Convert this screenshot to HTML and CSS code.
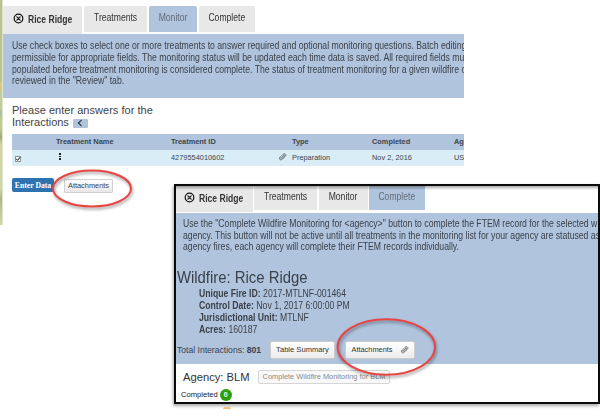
FILE: index.html
```
<!DOCTYPE html>
<html lang="en">
<head>
<meta charset="utf-8">
<title>Treatment monitoring</title>
<link rel="stylesheet" href="styles.css">
</head>
<body>
<div class="map-strip"></div>
<main class="monitor">
  <nav class="tabs">
    <div class="tab fire"><svg class="close" viewBox="0 0 12 12"><circle cx="6" cy="6" r="4.7"/><path d="M4.2 4.2l3.6 3.6M7.8 4.2l-3.6 3.6"/></svg><span class="t-fire">Rice Ridge</span></div>
    <div class="tab treatments"><span>Treatments</span></div>
    <div class="tab mon active"><span>Monitor</span></div>
    <div class="tab complete"><span>Complete</span></div>
  </nav>
  <section class="notice">
    <p>Use check boxes to select one or more treatments to answer required and optional monitoring questions. Batch editing</p>
    <p>permissible for appropriate fields. The monitoring status will be updated each time data is saved. All required fields must</p>
    <p>populated before treatment monitoring is considered complete. The status of treatment monitoring for a given wildfire c</p>
    <p>reviewed in the "Review" tab.</p>
  </section>
  <h1><span class="h-a">Please enter answers for the</span><span class="h-b">Interactions<button class="back"><svg viewBox="0 0 8 8"><path d="M5.2 1.4L2.4 4l2.8 2.6"/></svg></button></span></h1>
  <div class="table">
    <div class="row head"><span></span><span>Treatment Name</span><span>Treatment ID</span><span></span><span>Type</span><span>Completed</span><span>Agency</span></div>
    <div class="row"><span class="check"><svg viewBox="0 0 6 6"><path d="M1.4 3l1.2 1.4L4.8 1.5"/></svg></span><span class="dots"><i></i><i></i><i></i></span><span>4279554010602</span><svg class="clip" viewBox="0 0 10 10"><path d="M3 7.2L6.7 3.5M2 6.2L5.6 2.5C7.5.7 9.9 2.9 8.2 4.7L4.7 8.1C2.9 9.7.5 8 2 6.2M4 7.7L7.4 4.3C8 3.5 7.2 2.8 6.5 3.5"/></svg><span>Preparation</span><span>Nov 2, 2016</span><span>USFS</span></div>
  </div>
  <div class="actions"><button class="enter">Enter Data</button><button class="attach-sm">Attachments</button></div>
</main>

<section class="window">
  <nav class="tabs">
    <div class="tab fire"><svg class="close" viewBox="0 0 12 12"><circle cx="6" cy="6" r="4.7"/><path d="M4.2 4.2l3.6 3.6M7.8 4.2l-3.6 3.6"/></svg><span class="t-fire">Rice Ridge</span></div>
    <div class="tab treatments"><span>Treatments</span></div>
    <div class="tab mon"><span>Monitor</span></div>
    <div class="tab complete active"><span>Complete</span></div>
  </nav>
  <section class="details">
    <div class="intro">
      <p>Use the "Complete Wildfire Monitoring for &lt;agency&gt;" button to complete the FTEM record for the selected w</p>
      <p>agency. This button will not be active until all treatments in the monitoring list for your agency are statused as</p>
      <p>agency fires, each agency will complete their FTEM records individually.</p>
    </div>
    <h2>Wildfire: Rice Ridge</h2>
    <div class="facts">
      <p><b>Unique Fire ID:</b> 2017-MTLNF-001464</p>
      <p><b>Control Date:</b> Nov 1, 2017 6:00:00 PM</p>
      <p><b>Jurisdictional Unit:</b> MTLNF</p>
      <p><b>Acres:</b> 160187</p>
    </div>
    <div class="totals"><span class="total">Total Interactions: <b>801</b></span><button class="summary">Table Summary</button><button class="attach">Attachments<svg class="clip" viewBox="0 0 10 10"><path d="M3 7.2L6.7 3.5M2 6.2L5.6 2.5C7.5.7 9.9 2.9 8.2 4.7L4.7 8.1C2.9 9.7.5 8 2 6.2M4 7.7L7.4 4.3C8 3.5 7.2 2.8 6.5 3.5"/></svg></button></div>
  </section>
  <div class="agency"><span class="agency-name">Agency: BLM</span><button class="finish">Complete Wildfire Monitoring for BLM</button></div>
  <div class="status"><span>Completed</span><b>0</b></div>
</section>
<div class="peek"></div>
<svg class="marks" viewBox="0 0 600 416"><ellipse cx="92" cy="188.5" rx="39" ry="18"/><ellipse cx="386.3" cy="347" rx="48.7" ry="27.7"/></svg>
</body>
</html>
```
FILE: styles.css
```
* { box-sizing: border-box; }
body { margin: 0; width: 600px; height: 416px; overflow: hidden; position: relative; display: flex; align-items: flex-start; background: #fff; color: #3b424b; font: 10.2px/12px "Liberation Sans", sans-serif; }
p, h1, h2 { margin: 0; font-weight: 400; white-space: nowrap; }
p { transform: scaleX(.851); transform-origin: 0 0; }
button { font: inherit; color: inherit; margin: 0; padding: 0; border: 0; white-space: nowrap; flex: none; }
svg { fill: none; stroke: #333; stroke-linecap: round; }
.map-strip { width: 3px; height: 225px; flex: none; border-right: 1px solid #dfe3ce; background: linear-gradient(#b9c68b 0 36%, #d9c982 37% 39%, #c1cd9b 41% 48%, #a6bda8 50%, #c3cb94 53% 57%, #9fae77 61%, #ced7a1 64% 84%, #aeb982 88%, #d3d8a9); }
.monitor { width: 461px; height: 225px; padding-top: 6px; overflow: hidden; flex: none; }
.tabs { display: flex; height: 28px; gap: 2px; }
.tab { height: 26px; background: #e8e8e8; color: #333; border-radius: 2px 2px 0 0; flex: none; display: flex; justify-content: center; padding-top: 6px; white-space: nowrap; }
.tab span { transform: scaleX(.845); }
.tab.fire { width: 79px; height: 28px; padding: 8px 0 0 10px; justify-content: flex-start; gap: 4px; font-weight: 700; }
.tab .t-fire { transform: scaleX(.84); transform-origin: 0 0; }
.tab.treatments { width: 63px; }
.tab.mon { width: 48px; }
.tab.complete { width: 56px; }
.tab.active { background: #b0c4de; color: #626c79; }
.close { width: 11px; height: 11px; stroke: #111; stroke-width: 1.3; margin-top: -1px; flex: none; }
.notice { background: #b0c4de; height: 64px; padding: 6px 9px; line-height: 11.8px; }
h1 { display: flex; flex-direction: column; padding: 6px 0 0 9px; font-size: 11px; line-height: 12.3px; height: 36px; color: #444; }
.h-a { letter-spacing: .03px; }
.back { width: 15px; height: 9px; margin-left: 4px; background: #b0c4de; vertical-align: -1px; border-radius: 1px; line-height: 0; }
.back svg { width: 8px; height: 8px; stroke-width: 1.2; }
.table { margin-left: 9px; font-size: 7.4px; }
.row { display: grid; grid-template-columns: 44px 115px 107px 14px 80px 82px 40px; height: 16px; line-height: 16px; background: #d9edf7; color: #3d454b; }
.row.head { background: #b0c4de; font-weight: 700; }
.check { width: 6px; height: 6px; margin: 6px 0 0 3px; border: 1px solid #899; background: #fff; line-height: 0; display: block; }
.check svg { width: 6px; height: 6px; margin: -1px; stroke: #111; }
.dots { display: flex; flex-direction: column; gap: 1px; padding: 3px 0 0 3px; }
.dots i { width: 1.6px; height: 1.6px; background: #222; }
.clip { width: 9px; height: 9px; stroke: #4a4a4a; stroke-width: .75; }
.row .clip { margin-top: 2px; }
.actions { display: flex; gap: 10px; padding: 12px 0 0 9px; height: 30px; align-items: flex-start; }
.enter { width: 42px; height: 14px; background: #2f72b0; color: #fff; font: 700 7.7px/13px "Liberation Serif", serif; border-radius: 2px; }
.attach-sm { width: 49px; height: 14px; margin-top: 1px; font-size: 7.4px; line-height: 12px; background: linear-gradient(#fff, #e8e8e8); border: 1px solid #d0d0d0; border-radius: 1px; }
.window { position: absolute; left: 174px; top: 184px; width: 426px; height: 220px; border: 2px solid #0b0b0b; background: #fff; overflow: hidden; box-shadow: -1px 2px 3px #aaa; }
.window .tabs { gap: 1.5px; height: 27px; }
.window .tab { height: 24px; padding-top: 5px; border-radius: 0; }
.window .tab.fire { width: 76.5px; height: 26px; padding: 7px 0 0 8px; }
.window .tab.mon { width: 49px; }
.window .tab.complete { width: 56px; }
.window::after { content: ""; position: absolute; inset: 0 0 auto 0; height: 4px; background: linear-gradient(#0005, #0000); }
.details { height: 151px; background: #b0c4de; }
.intro { padding: 5px 0 0 7px; line-height: 11.7px; height: 54px; }
h2 { font-size: 16px; line-height: 21px; height: 20px; padding-left: 1px; transform: scaleX(.93); transform-origin: 0 0; }
.facts { padding: 1px 0 0 23px; line-height: 12px; height: 52px; }
.totals { display: flex; align-items: center; height: 18px; margin-top: 2px; }
.total { width: 94px; padding-left: 1px; font-size: 8.6px; white-space: nowrap; }
.summary, .attach { height: 18px; font-size: 7.6px; background: linear-gradient(#fff, #ececec); border: 1px solid #ccc; border-radius: 2px; color: #333; }
.summary { width: 65px; }
.attach { width: 70px; margin-left: 10px; display: flex; align-items: center; justify-content: center; gap: 7px; font-size: 7.4px; }
.attach .clip { margin-top: -2px; }
.agency { display: flex; align-items: center; height: 24px; padding: 2px 0 0 7px; color: #333; }
.agency-name { width: 75px; font-size: 11.2px; white-space: nowrap; }
.finish { width: 132px; height: 14px; font-size: 7.4px; line-height: 12px; color: #888; background: #f8f8f8; border: 1px solid #d5d5d5; border-radius: 2px; }
.status { display: flex; align-items: center; gap: 2px; padding: 1px 0 0 5px; font-size: 7.6px; color: #222; }
.status b { width: 12px; height: 12px; border-radius: 6px; background: #2ba00d; color: #fff; text-align: center; font-size: 7px; }
.peek { position: absolute; left: 223px; top: 407px; width: 8px; height: 2px; background: #f3c07c; border-radius: 3px 3px 0 0; }
.marks { position: absolute; left: 0; top: 0; width: 600px; height: 416px; stroke: #e84545; stroke-width: 2; filter: drop-shadow(1px 2px 1.5px #0006); pointer-events: none; }
```
